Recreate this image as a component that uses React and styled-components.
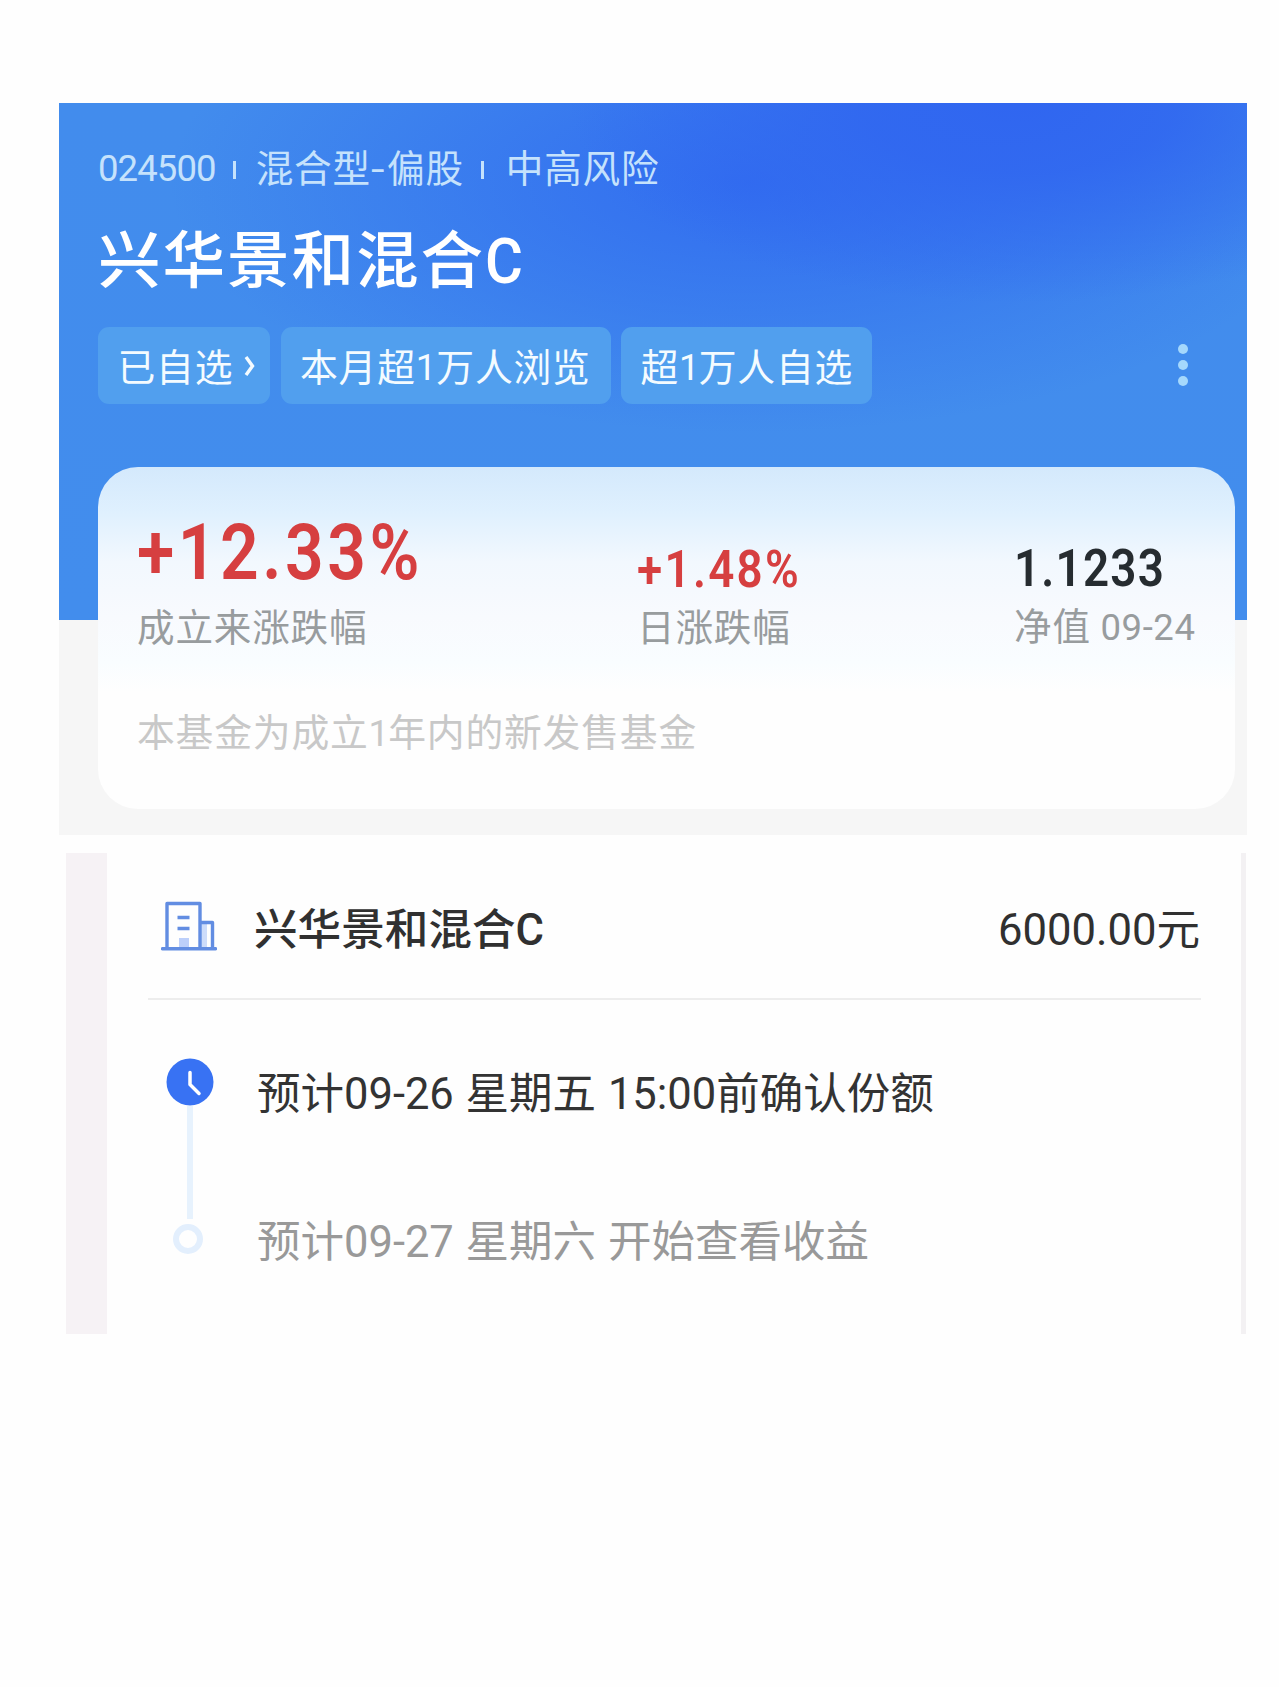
import React from 'react';
import styled, { createGlobalStyle } from 'styled-components';

const GlobalStyle = createGlobalStyle`
    * {
        box-sizing: border-box;
    }

    body {
        margin: 0;
        background: #fefefe;
        font-family: Roboto, 'Noto Sans CJK SC', sans-serif;
    }
`;

const Page = styled.main`
    width: 1279px;
    min-height: 1687px;
    padding: 103px 32px 0 59px;
    background: #fefefe;
`;

/**
 * FUND HEADER
 */
const Hero = styled.section`
    display: flex;
    flex-direction: column;
    height: 732px;
    padding: 44px 12px 0 39px;
    background-color: #f6f6f6;
    background-image:
        radial-gradient(ellipse 450px 200px at 960px 0, #3066f0 0%, rgba(48, 102, 240, 0.85) 35%, rgba(48, 102, 240, 0) 100%),
        radial-gradient(ellipse 580px 250px at 690px 80px, rgba(48, 106, 240, 0.9) 0%, rgba(48, 106, 240, 0.5) 45%, rgba(48, 106, 240, 0) 100%),
        linear-gradient(#428ced, #428ded);
    background-size: 100% 517px;
    background-repeat: no-repeat;
`;

const MetaRow = styled.div`
    display: flex;
    align-items: center;
    height: 44px;
    font-size: 37.6px;
    line-height: 44px;
    letter-spacing: 0.8px;
    color: #c5e2fc;
    white-space: nowrap;
`;

const Num = styled.span`
    font-size: 36.5px;
    letter-spacing: ${props => props.$spacing || '-0.9px'};
`;

const Hyphen = styled.span`
    display: inline-block;
    margin-right: 5px;
    transform: scaleX(1.3);
    transform-origin: left;
`;

const MetaDivider = styled.span`
    width: 3px;
    height: 18px;
    margin: ${props => props.$margin};
    background: #c5e2fc;
`;

const FundName = styled.h1`
    margin: 31px 0 25px;
    font-size: 62.5px;
    font-weight: 500;
    line-height: 80px;
    letter-spacing: 2px;
    color: #fff;
    white-space: nowrap;
`;

const NarrowLetter = styled.span`
    display: inline-block;
    transform: scaleX(0.93);
    transform-origin: left;
`;

const ChipRow = styled.div`
    display: flex;
    gap: 10.5px;
    align-items: center;
`;

const Chip = styled.div`
    display: flex;
    align-items: center;
    width: ${props => props.$width};
    height: 77px;
    padding: 4px 0 0 19.5px;
    border-radius: 11px;
    background: #519fee;
    color: #f4fbff;
    font-size: 37.8px;
    line-height: 44px;
    letter-spacing: 0.8px;
    white-space: nowrap;
`;

const ChevronSvg = styled.svg`
    width: 11px;
    height: 20px;
    margin: -4px 0 0 11px;
`;

const MoreDots = styled.div`
    display: flex;
    flex-direction: column;
    gap: 6px;
    margin: -2px 47px 0 auto;
`;

const Dot = styled.span`
    width: 10px;
    height: 10px;
    border-radius: 50%;
    background: #a5d8fc;
`;

/**
 * PERFORMANCE CARD
 */
const StatsCard = styled.div`
    height: 342px;
    margin-top: 63px;
    padding: 46px 0 0 39px;
    border-radius: 40px;
    background: linear-gradient(180deg, #d4e9fc 0, #dff0fe 45px, #f2f8fe 95px, #f8fafe 150px, #f9fdff 195px, #fefefe 225px);
`;

const StatsGrid = styled.div`
    display: grid;
    grid-template-columns: 500px 377px 1fr;
    align-items: end;
`;

const StatValue = styled.div`
    margin-bottom: ${props => props.$large ? '13px' : '6px'};
    font-size: ${props => props.$large ? '77px' : '52px'};
    line-height: ${props => props.$large ? '80px' : '60px'};
    letter-spacing: ${props => props.$spacing};
    font-weight: 600;
    color: ${props => props.$color || '#d63f40'};
    white-space: nowrap;
    transform: scaleX(0.88);
    transform-origin: left;
`;

const StatLabel = styled.div`
    font-size: 37.6px;
    line-height: 44px;
    letter-spacing: 0.8px;
    color: #989c9e;
    white-space: nowrap;
`;

const Notice = styled.p`
    margin: 61px 0 0;
    font-size: 37.8px;
    line-height: 44px;
    letter-spacing: 0.8px;
    color: #c8c8c8;
    white-space: nowrap;
`;

/**
 * ORDER PANEL
 */
const OrderPanel = styled.section`
    width: 1180px;
    height: 481px;
    margin: 18px 0 0 7px;
    padding: 0 40px 0 41px;
    border-left: 41px solid #f6f2f5;
    border-right: 5px solid #f3f1f3;
`;

const OrderHeader = styled.header`
    display: flex;
    align-items: center;
    height: 147px;
    padding: 11px 1px 0 13px;
    border-bottom: 2px solid #ededed;
    font-size: 43.6px;
    line-height: 60px;
    color: #303030;
`;

const BuildingSvg = styled.svg`
    width: 56px;
    height: 52px;
    margin-top: -11px;
`;

const OrderName = styled.h2`
    margin: 0 auto 0 37px;
    font-size: inherit;
    font-weight: 500;
`;

const Timeline = styled.div`
    display: flex;
    padding-top: 58px;
`;

const Rail = styled.div`
    display: flex;
    flex-direction: column;
    align-items: center;
    width: 47px;
    margin-left: 18px;
`;

const ClockSvg = styled.svg`
    width: 48px;
    height: 48px;
`;

const RailLine = styled.span`
    width: 6px;
    height: 113px;
    background: #e7f2fd;
`;

const RailRing = styled.span`
    width: 30px;
    height: 30px;
    margin: 5px 3px 0 0;
    border: 6px solid #e3effd;
    border-radius: 50%;
`;

const Steps = styled.div`
    display: flex;
    flex-direction: column;
    gap: 88px;
    margin: 7px 0 0 44px;
`;

const Step = styled.div`
    font-size: 43.5px;
    line-height: 60px;
    word-spacing: 1px;
    color: ${props => props.$pending ? '#999' : '#333'};
    white-space: nowrap;
`;

const BuildingIcon = () => (
    <BuildingSvg viewBox="0 0 56 52" fill="none" stroke="#628de2" strokeWidth="3.4">
        <path d="M40 22h6v26h-6z" fill="#cddcfa" stroke="none" />
        <path d="M18 38h10v10H18z" fill="#bccffa" stroke="none" />
        <path d="M6 48V3.5h33V48M39 22.5h12.5V48" strokeLinejoin="round" />
        <path d="M1.5 48.8h53" strokeLinecap="round" />
        <path d="M16.5 17.5h12M16.5 28.5h12" />
    </BuildingSvg>
);

const ClockIcon = () => (
    <ClockSvg viewBox="0 0 48 48" fill="none">
        <circle cx="24" cy="24" r="23.5" fill="#3872f3" />
        <path d="M24 14.5v12L33 35.5" stroke="#fff" strokeWidth="3.5" strokeLinecap="round" strokeLinejoin="round" />
    </ClockSvg>
);

const ChevronIcon = () => (
    <ChevronSvg viewBox="0 0 11 20" fill="none">
        <path d="M2 1l6.5 9L2 19" stroke="#f4fbff" strokeWidth="3.4" />
    </ChevronSvg>
);

const stats = [
    { value: '+12.33%', label: '成立来涨跌幅', large: true, spacing: '4px' },
    { value: '+1.48%', label: '日涨跌幅', spacing: '2.6px' },
    { value: '1.1233', label: '净值', date: '09-24', color: '#262c30', spacing: '1.4px' }
];

const App = () => (
    <>
        <GlobalStyle />
        <Page>
            <Hero>
                <MetaRow>
                    <Num>024500</Num>
                    <MetaDivider $margin="2px 20px 0 17px" />
                    <span>混合型<Hyphen>-</Hyphen>偏股</span>
                    <MetaDivider $margin="2px 22px 0 17px" />
                    <span>中高风险</span>
                </MetaRow>
                <FundName>兴华景和混合<NarrowLetter>C</NarrowLetter></FundName>
                <ChipRow>
                    <Chip $width="172px">已自选<ChevronIcon /></Chip>
                    <Chip $width="330px">本月超<Num $spacing="0">1</Num>万人浏览</Chip>
                    <Chip $width="251px">超<Num>1</Num>万人自选</Chip>
                    <MoreDots>
                        <Dot />
                        <Dot />
                        <Dot />
                    </MoreDots>
                </ChipRow>
                <StatsCard>
                    <StatsGrid>
                        {stats.map(stat => (
                            <div key={stat.label}>
                                <StatValue $large={stat.large} $color={stat.color} $spacing={stat.spacing}>
                                    {stat.value}
                                </StatValue>
                                <StatLabel>
                                    {stat.label}
                                    {stat.date && <Num $spacing="0.6px"> {stat.date}</Num>}
                                </StatLabel>
                            </div>
                        ))}
                    </StatsGrid>
                    <Notice>本基金为成立<Num>1</Num>年内的新发售基金</Notice>
                </StatsCard>
            </Hero>
            <OrderPanel>
                <OrderHeader>
                    <BuildingIcon />
                    <OrderName>兴华景和混合C</OrderName>
                    <span>6000.00元</span>
                </OrderHeader>
                <Timeline>
                    <Rail>
                        <ClockIcon />
                        <RailLine />
                        <RailRing />
                    </Rail>
                    <Steps>
                        <Step>预计09-26 星期五 15:00前确认份额</Step>
                        <Step $pending>预计09-27 星期六 开始查看收益</Step>
                    </Steps>
                </Timeline>
            </OrderPanel>
        </Page>
    </>
);

export default App;
